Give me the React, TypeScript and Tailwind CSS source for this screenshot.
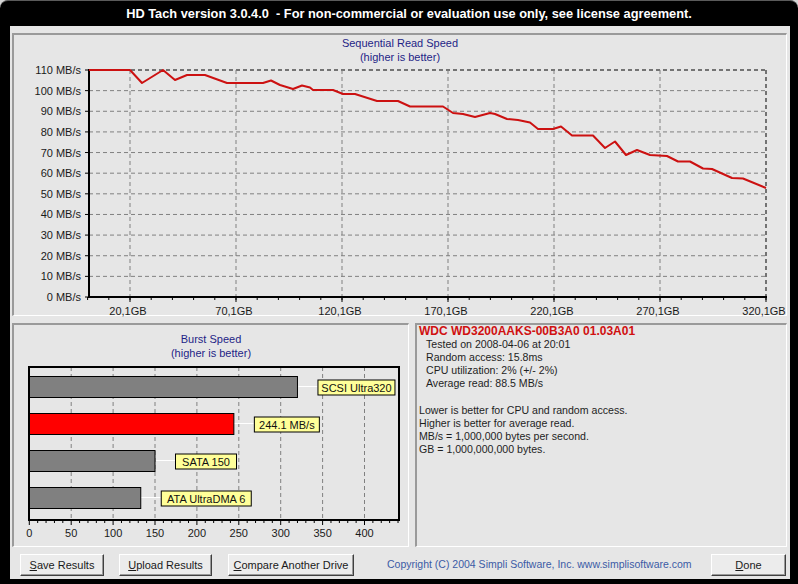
import React from "react";

const FONT = "'Liberation Sans', Arial, sans-serif";

// read speed curve, page coordinates
const CURVE: [number, number][] = [
  [89, 70], [130, 70], [142, 83], [163, 70], [175, 80], [187, 75], [205, 75],
  [227, 83], [263, 83], [271, 80.5], [280, 85], [293, 89], [302, 85.5], [310, 87.5],
  [313, 90], [333, 90], [343, 94], [355, 94], [377, 101], [398, 101], [410, 106.5],
  [443, 106.5], [453, 113], [463, 114], [475, 117], [490, 113], [495, 114], [507, 119],
  [518, 120], [530, 122.5], [538, 129], [553, 129], [561, 126.5], [572, 135.5],
  [593, 135.5], [605, 148], [615, 141.5], [626, 155], [637, 150], [650, 155],
  [667, 156], [678, 161.5], [690, 161.5], [703, 168.5], [712, 169], [732, 178],
  [743, 178.5], [766, 188],
];

const gbX = (g: number) => 130 + (g - 20.1) * 2.12;
const mbY = (v: number) => 297 - (v / 110) * 227;

function ReadChart() {
  const yVals = Array.from({ length: 12 }, (_, i) => i * 10);
  const majors = [20.1, 70.1, 120.1, 170.1, 220.1, 270.1, 320.1];
  const minors: number[] = [];
  for (let g = 0.1; g <= 320.2; g += 10) minors.push(g);

  return (
    <svg
      width={772}
      height={251}
      viewBox="14 64 772 251"
      className="block overflow-visible"
      fontFamily={FONT}
      fontSize={11}
    >
      {yVals.map((v) => (
        <g key={v}>
          {v > 0 && (
            <line
              x1={89}
              x2={766}
              y1={mbY(v)}
              y2={mbY(v)}
              stroke={v === 110 ? "#000" : "#808080"}
              strokeDasharray="4 3"
            />
          )}
          <line x1={85} x2={89} y1={mbY(v)} y2={mbY(v)} stroke="#000" />
          <text x={81} y={mbY(v) + 4} textAnchor="end" fill="#1a1a1a">
            {v} MB/s
          </text>
        </g>
      ))}
      {majors.map((g, i) => (
        <g key={g}>
          <line
            x1={gbX(g)}
            x2={gbX(g)}
            y1={70}
            y2={297}
            stroke={i === majors.length - 1 ? "#000" : "#808080"}
            strokeDasharray="4 3"
          />
          <line x1={gbX(g)} x2={gbX(g)} y1={297} y2={302} stroke="#000" />
          <text x={gbX(g) - 2} y={315} textAnchor="middle" fill="#1a1a1a">
            {String(g).replace(".", ",")}GB
          </text>
        </g>
      ))}
      {minors.map((g) => (
        <line key={g} x1={gbX(g)} x2={gbX(g)} y1={297} y2={300} stroke="#000" />
      ))}
      <line x1={89} x2={89} y1={69} y2={298} stroke="#000" strokeWidth={2} />
      <line x1={88} x2={767} y1={297} y2={297} stroke="#000" strokeWidth={2} />
      <polyline
        points={CURVE.map((p) => p.join(",")).join(" ")}
        fill="none"
        stroke="#cc1111"
        strokeWidth={2}
        strokeLinejoin="round"
      />
    </svg>
  );
}

const bx = (v: number) => 29.3 + v * 0.838;

const BARS = [
  { value: 320, y: 376, label: "SCSI Ultra320", w: 77, red: false },
  { value: 244.1, y: 413, label: "244.1 MB/s", w: 65, red: true },
  { value: 150, y: 450, label: "SATA 150", w: 61, red: false },
  { value: 133, y: 487, label: "ATA UltraDMA 6", w: 90, red: false },
];

function BurstChart() {
  const grid = [50, 100, 150, 200, 250, 300, 350, 400];
  const ticks: number[] = [];
  for (let v = 0; v <= 440; v += 10) ticks.push(v);

  return (
    <svg
      width={394}
      height={186}
      viewBox="14 360 394 186"
      className="block overflow-visible"
      fontFamily={FONT}
      fontSize={11}
    >
      {grid.map((v) => (
        <line
          key={v}
          x1={bx(v)}
          x2={bx(v)}
          y1={367}
          y2={520}
          stroke="#808080"
          strokeDasharray="4 3"
        />
      ))}
      {ticks.map((v) => (
        <line
          key={v}
          x1={bx(v)}
          x2={bx(v)}
          y1={520}
          y2={v % 50 === 0 ? 525 : 523}
          stroke="#000"
        />
      ))}
      {[0, ...grid].map((v) => (
        <text key={v} x={bx(v)} y={537} textAnchor="middle" fill="#1a1a1a">
          {v}
        </text>
      ))}
      <rect x={29} y={367} width={370} height={153} fill="none" stroke="#000" strokeWidth={2} />
      {BARS.map((b) => {
        const end = bx(b.value);
        const mid = b.y + 10.5;
        const lx = end + 20;
        return (
          <g key={b.label}>
            <rect
              x={29.5}
              y={b.y + 0.5}
              width={end - 29.5}
              height={21}
              fill={b.red ? "#ff0000" : "#808080"}
              stroke="#000"
            />
            <line x1={end + 1} x2={lx} y1={mid} y2={mid} stroke="#fff" />
            <rect
              x={lx + 0.5}
              y={mid - 6.5}
              width={b.w}
              height={15}
              fill="#ffff99"
              stroke="#000"
            />
            <text x={lx + 0.5 + b.w / 2} y={mid + 5} textAnchor="middle" fill="#111">
              {b.label}
            </text>
          </g>
        );
      })}
    </svg>
  );
}

function Btn({ w, mnemonic, rest }: { w: string; mnemonic: string; rest: string }) {
  return (
    <div
      className={`${w} flex h-[22px] items-center justify-center border border-t-white border-l-white border-r-[#404040] border-b-[#404040] bg-[#ececec] text-[11px] text-[#1a1a1a] shadow-[inset_-1px_-1px_0_#9a9a9a]`}
    >
      <span className="underline">{mnemonic}</span>
      {rest}
    </div>
  );
}

const panel =
  "border-t-2 border-l-2 border-r border-b border-t-[#9a9a9a] border-l-[#9a9a9a] border-r-white border-b-white";

export default function App() {
  return (
    <div className="h-[584px] w-[798px] bg-[#d6d6d6]" style={{ fontFamily: FONT }}>
      <div className="flex h-full flex-col rounded-t-[8px] border-t border-t-[#5a5a5a] bg-black">
        <div className="flex h-[25px] items-center justify-center pl-[20px] text-[12.8px] font-bold text-white">
          HD Tach version 3.0.4.0&nbsp;&nbsp;- For non-commercial or evaluation use only, see license agreement.
        </div>

        <div className="ml-[10px] flex h-[553px] w-[780px] flex-col bg-[#e6e6e6] pl-[2px] pt-[7px]">
          <div className={`${panel} h-[283px] w-[775px]`}>
            <div className="pt-[1px] text-center text-[11px] leading-[14px] text-[#1f1f87]">
              <div>Sequential Read Speed</div>
              <div>(higher is better)</div>
            </div>
            <ReadChart />
          </div>

          <div className="mt-[7px] flex gap-[6px]">
            <div className={`${panel} h-[224px] w-[397px]`}>
              <div className="pt-[7px] text-center text-[11px] leading-[14px] text-[#1f1f87]">
                <div>Burst Speed</div>
                <div>(higher is better)</div>
              </div>
              <BurstChart />
            </div>

            <div className={`${panel} h-[224px] w-[372px] pl-[2px] text-[10.6px] leading-[13px] text-[#1e1e1e]`}>
              <div className="text-[12px] font-bold text-[#d01010]">WDC WD3200AAKS-00B3A0 01.03A01</div>
              <div className="pl-[7px]">
                <div>Tested on 2008-04-06 at 20:01</div>
                <div>Random access: 15.8ms</div>
                <div>CPU utilization: 2% (+/- 2%)</div>
                <div>Average read: 88.5 MB/s</div>
              </div>
              <div className="mt-[14px]">
                <div>Lower is better for CPU and random access.</div>
                <div>Higher is better for average read.</div>
                <div>MB/s = 1,000,000 bytes per second.</div>
                <div>GB = 1,000,000,000 bytes.</div>
              </div>
            </div>
          </div>

          <div className="mt-[7px] flex items-center pl-[8px] pr-[4px]">
            <Btn w="w-[84px]" mnemonic="S" rest="ave Results" />
            <div className="ml-[15px]">
              <Btn w="w-[93px]" mnemonic="U" rest="pload Results" />
            </div>
            <div className="ml-[16px]">
              <Btn w="w-[126px]" mnemonic="C" rest="ompare Another Drive" />
            </div>
            <div className="ml-[33px] text-[10.5px] text-[#3b5ba5]">
              Copyright (C) 2004 Simpli Software, Inc. www.simplisoftware.com
            </div>
            <div className="ml-auto">
              <Btn w="w-[75px]" mnemonic="D" rest="one" />
            </div>
          </div>
        </div>
      </div>
    </div>
  );
}
